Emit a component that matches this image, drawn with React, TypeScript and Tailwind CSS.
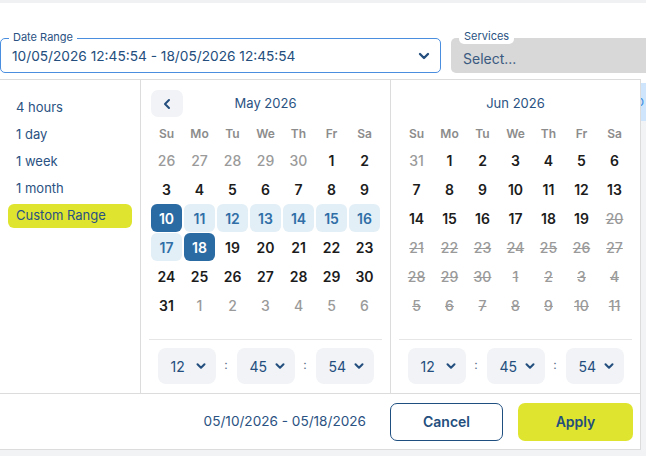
import { ChevronDown, ChevronLeft } from 'lucide-react';

type Kind = 'muted' | 'normal' | 'start' | 'end' | 'range' | 'disabled';
type Day = { d: number; k: Kind };

const weekdays = ['Su', 'Mo', 'Tu', 'We', 'Th', 'Fr', 'Sa'];

function build(list: Array<[number, Kind]>): Day[] {
  return list.map(([d, k]) => ({ d, k }));
}

const mayDays = build([
  [26, 'muted'], [27, 'muted'], [28, 'muted'], [29, 'muted'], [30, 'muted'], [1, 'normal'], [2, 'normal'],
  [3, 'normal'], [4, 'normal'], [5, 'normal'], [6, 'normal'], [7, 'normal'], [8, 'normal'], [9, 'normal'],
  [10, 'start'], [11, 'range'], [12, 'range'], [13, 'range'], [14, 'range'], [15, 'range'], [16, 'range'],
  [17, 'range'], [18, 'end'], [19, 'normal'], [20, 'normal'], [21, 'normal'], [22, 'normal'], [23, 'normal'],
  [24, 'normal'], [25, 'normal'], [26, 'normal'], [27, 'normal'], [28, 'normal'], [29, 'normal'], [30, 'normal'],
  [31, 'normal'], [1, 'muted'], [2, 'muted'], [3, 'muted'], [4, 'muted'], [5, 'muted'], [6, 'muted'],
]);

const junDays = build([
  [31, 'muted'], [1, 'normal'], [2, 'normal'], [3, 'normal'], [4, 'normal'], [5, 'normal'], [6, 'normal'],
  [7, 'normal'], [8, 'normal'], [9, 'normal'], [10, 'normal'], [11, 'normal'], [12, 'normal'], [13, 'normal'],
  [14, 'normal'], [15, 'normal'], [16, 'normal'], [17, 'normal'], [18, 'normal'], [19, 'normal'], [20, 'disabled'],
  [21, 'disabled'], [22, 'disabled'], [23, 'disabled'], [24, 'disabled'], [25, 'disabled'], [26, 'disabled'], [27, 'disabled'],
  [28, 'disabled'], [29, 'disabled'], [30, 'disabled'], [1, 'disabled'], [2, 'disabled'], [3, 'disabled'], [4, 'disabled'],
  [5, 'disabled'], [6, 'disabled'], [7, 'disabled'], [8, 'disabled'], [9, 'disabled'], [10, 'disabled'], [11, 'disabled'],
]);

const dayStyles: Record<Kind, string> = {
  muted: 'text-[#9a9a9a] font-medium',
  normal: 'text-[#1c1c1c] font-semibold',
  start: 'bg-[#2b6ba3] text-white font-semibold',
  end: 'bg-[#2b6ba3] text-white font-semibold',
  range: 'bg-[#e3eff6] text-[#2f6ea6] font-semibold',
  disabled: 'text-[#9a9a9a] font-medium line-through',
};

function TimeSelect({ value }: { value: string }) {
  return (
    <div className="w-[58px] h-[36px] rounded-[8px] bg-[#f1f3f6] flex items-center justify-between pl-[13px] pr-[8px] text-[14px] text-[#234e7d]">
      <span>{value}</span>
      <ChevronDown size={14} strokeWidth={3.5} className="text-[#234e7d]" />
    </div>
  );
}

function Calendar({ title, days, showPrev, bordered }: { title: string; days: Day[]; showPrev?: boolean; bordered?: boolean }) {
  return (
    <div className={`flex flex-col pt-[10px] ${bordered ? 'w-[250px] border-r border-[#dcdcdc]' : 'flex-1'}`}>
      <div className="px-[10px] h-[27px] relative flex items-center justify-center">
        {showPrev && (
          <div className="absolute left-[10px] top-0 w-[32px] h-[27px] rounded-[7px] bg-[#f1f3f6] flex items-center justify-center">
            <ChevronLeft size={16} strokeWidth={3} className="text-[#234e7d]" />
          </div>
        )}
        <span className="text-[13px] text-[#2a5282] mt-[1px]">{title}</span>
      </div>
      <div className="px-[10px] mt-[4px] grid grid-cols-7 gap-x-[2px] h-[25px] items-center">
        {weekdays.map((w) => (
          <div key={w} className="text-center text-[12px] font-semibold text-[#8c8c8c]">{w}</div>
        ))}
      </div>
      <div className="px-[10px] grid grid-cols-7 gap-x-[2px] gap-y-[1px]">
        {days.map((day, i) => (
          <div key={i} className={`h-[28px] rounded-[6px] flex items-center justify-center text-[14px] ${dayStyles[day.k]}`}>
            {day.d}
          </div>
        ))}
      </div>
      <div className="mx-[8px] mt-[20px] border-t border-[#e6e6e6] pt-[8px] pb-[8px] flex items-center justify-center gap-[8px]">
        <TimeSelect value="12" />
        <span className="w-[5px] text-center text-[12px] text-[#5a6f88] -mt-[3px]">:</span>
        <TimeSelect value="45" />
        <span className="w-[5px] text-center text-[12px] text-[#5a6f88] -mt-[3px]">:</span>
        <TimeSelect value="54" />
      </div>
    </div>
  );
}

export default function App() {
  const ranges = ['4 hours', '1 day', '1 week', '1 month', 'Custom Range'];

  return (
    <div className="relative w-[646px] h-[456px] overflow-hidden bg-white font-['Inter',sans-serif]">
      <div className="h-[3px] bg-[#f0f1f3]" />

      {/* Filters */}
      <div className="mt-[35px] flex gap-[10px]">
        <div className="relative w-[441px] h-[35px] shrink-0 rounded-[5px] border border-[#4a8ee0] flex items-center justify-between pl-[11px] pr-[8px]">
          <span className="absolute left-[8px] top-[-10px] bg-white px-[4px] text-[11px] leading-[16px] text-[#2a5282]">Date Range</span>
          <span className="text-[13.7px] text-[#234e7d] mt-[2px]">10/05/2026 12:45:54 - 18/05/2026 12:45:54</span>
          <ChevronDown size={16} strokeWidth={3.5} className="text-[#234e7d]" />
        </div>
        <div className="relative flex-1 h-[35px] rounded-l-[5px] bg-[#d8d8d8] flex items-center pl-[12px]">
          <span className="absolute left-[8px] top-[-10px] bg-white rounded-[5px] px-[5px] text-[11px] leading-[16px] text-[#2a5282]">Services</span>
          <span className="text-[14px] text-[#3b5a80] mt-[5px]">Select...</span>
        </div>
      </div>

      {/* Page content behind the picker */}
      <div className="mt-[10px] h-[38px] bg-[#cfe5fb] flex items-center justify-end pr-[2px] text-[13px] text-[#3d8fe0]">o</div>
      <div className="h-[400px] bg-[#f2f3f5]" />

      {/* Date range picker popup */}
      <div className="absolute left-[-1px] top-[79px] w-[642px] h-[371px] bg-white border border-[#dcdcdc] flex flex-col z-10">
        <div className="flex h-[314px] border-b border-[#dcdcdc]">
          <div className="w-[141px] border-r border-[#dcdcdc] px-[8px] pt-[16px] flex flex-col gap-[3px]">
            {ranges.map((r) => (
              <div
                key={r}
                className={`h-[24px] rounded-[6px] px-[8px] flex items-center text-[13px] text-[#2a5282] ${r === 'Custom Range' ? 'bg-[#dfe52e]' : ''}`}
              >
                {r}
              </div>
            ))}
          </div>
          <Calendar title="May 2026" days={mayDays} showPrev bordered />
          <Calendar title="Jun 2026" days={junDays} />
        </div>
        <div className="flex-1 flex items-center justify-end pr-[7px]">
          <span className="text-[13.6px] text-[#2a5282] mr-[24px]">05/10/2026 - 05/18/2026</span>
          <button className="w-[113px] h-[38px] rounded-[7px] border-[1.5px] border-[#1f4f80] bg-white text-[14px] font-semibold text-[#234e7d]">
            Cancel
          </button>
          <button className="ml-[15px] w-[115px] h-[38px] rounded-[7px] bg-[#dfe52e] text-[14px] font-semibold text-[#234e7d]">
            Apply
          </button>
        </div>
      </div>
    </div>
  );
}
